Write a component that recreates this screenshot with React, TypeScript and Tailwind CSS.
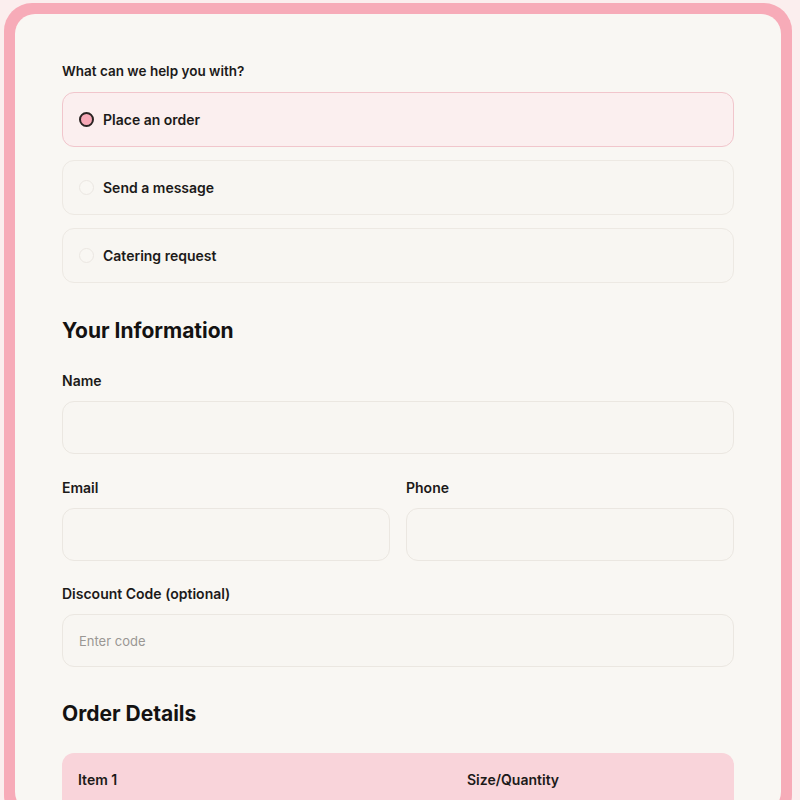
import { useState } from "react";

const options = ["Place an order", "Send a message", "Catering request"];

function Field({ label, placeholder }: { label: string; placeholder?: string }) {
  return (
    <div className="flex flex-col">
      <label className="text-[14px] leading-5 font-semibold text-[#1c1a19]">{label}</label>
      <input
        placeholder={placeholder}
        className="mt-[10px] h-[53px] w-full rounded-[12px] border border-[#ebe7e1] bg-[#f8f6f2] px-4 text-[13px] text-[#1c1a19] outline-none placeholder:text-[#9a9794]"
      />
    </div>
  );
}

export default function App() {
  const [choice, setChoice] = useState(0);

  return (
    <div className="h-[800px] w-[800px] overflow-hidden bg-[#fbeeee] pl-[4px] pt-[3px] font-['Inter',sans-serif]">
      <div className="h-[820px] w-[788px] rounded-[28px] bg-[#f7abb8] p-[11px]">
        <div className="h-full rounded-[20px] bg-[#f9f7f3] px-[47px] pt-[47px]">
          <p className="text-[13.5px] leading-5 font-semibold text-[#1c1a19]">What can we help you with?</p>

          <div className="mt-[11px] flex flex-col gap-[13px]">
            {options.map((o, i) => (
              <button
                key={o}
                onClick={() => setChoice(i)}
                className={`flex h-[55px] items-center rounded-[12px] border px-4 text-left ${
                  choice === i ? "border-[#f1c6cc] bg-[#fbefef]" : "border-[#ede9e3] bg-[#f8f6f2]"
                }`}
              >
                <span
                  className={`h-[15px] w-[15px] rounded-full ${
                    choice === i ? "border-2 border-[#2a2423] bg-[#f6a9b7]" : "border border-[#ebe7e2] bg-[#f9f7f3]"
                  }`}
                />
                <span className="ms-[9px] text-[14px] font-semibold text-[#1c1a19]">{o}</span>
              </button>
            ))}
          </div>

          <h2 className="mt-[34px] text-[21px] leading-7 font-bold text-[#141211]">Your Information</h2>

          <div className="mt-[26px]">
            <Field label="Name" />
          </div>

          <div className="mt-[24px] grid grid-cols-2 gap-4">
            <Field label="Email" />
            <Field label="Phone" />
          </div>

          <div className="mt-[23px]">
            <Field label="Discount Code (optional)" placeholder="Enter code" />
          </div>

          <h2 className="mt-[33px] text-[21px] leading-7 font-bold text-[#141211]">Order Details</h2>

          <div className="mt-[25px] rounded-[12px] bg-[#f9d4da] px-4 pt-[17px] pb-6">
            <div className="flex text-[14px] leading-5 font-semibold text-[#1c1a19]">
              <span className="w-[389px]">Item 1</span>
              <span>Size/Quantity</span>
            </div>
          </div>
        </div>
      </div>
    </div>
  );
}
